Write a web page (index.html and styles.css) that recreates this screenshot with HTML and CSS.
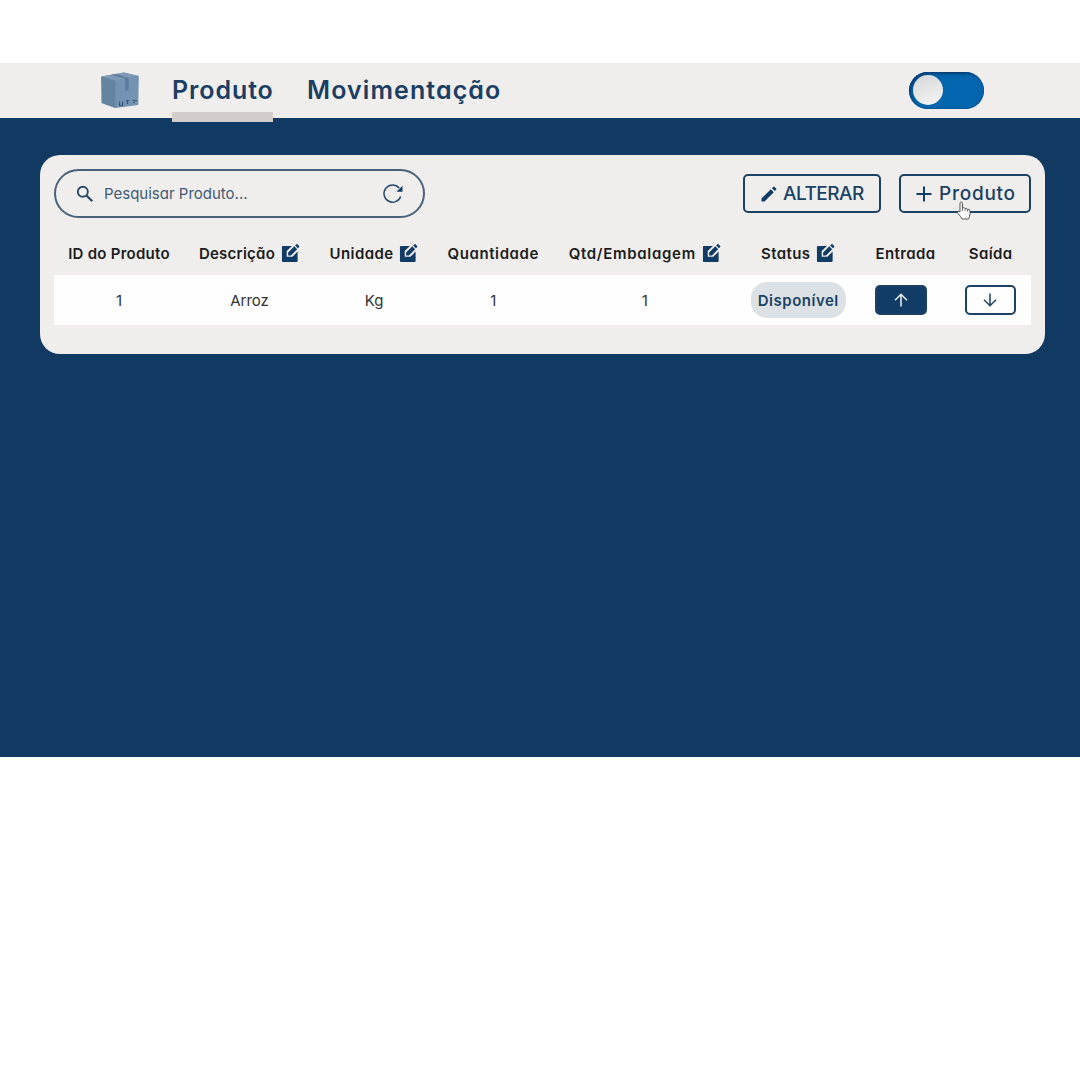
FILE: index.html
```html
<!DOCTYPE html>
<html lang="pt-BR">
<head>
<meta charset="utf-8">
<title>Produto</title>
<link rel="stylesheet" href="styles.css">
</head>
<body>
<svg class="defs" width="0" height="0">
  <symbol id="edit" viewBox="0 0 20 20">
    <path fill="#113c65" d="M1.500 2.500H11.500L6 8V14H12L17.500 8.500V18.500Q17.500 19.500 16.500 19.500H2Q1 19.500 1 18.500V3.500Q1 2.500 2 2.500Z"/>
    <path fill="#113c65" d="M7.500 9.500L14 3L17 6L10.500 12.500H7.500ZM14.900 2.100L16.200.8Q16.800.3 17.400.8L19.100 2.500Q19.600 3.100 19.100 3.700L17.800 5Z"/>
  </symbol>
</svg>
<div class="app">
  <header class="topbar">
    <svg class="logo" viewBox="0 0 40 38" width="40" height="38">
      <path fill="#7492b2" d="M1.300 4.500L24 .5L38.800 4L38.300 33L15.500 36L1.700 31Z"/>
      <path fill="#64839f" d="M1.300 4.500L15.500 8.500V36L1.700 31Z"/>
      <path fill="#7c99b8" d="M1.300 4.500L24 .5L38.800 4L15.500 8.500Z"/>
      <path fill="#5b7a9a" d="M11 2.800L15 2.100L28.500 6V18L25.300 19V6.600Z"/>
      <path d="M19.500 29.500V33.500H22.500V29.500M26 28.500H29M27.500 28.500V32M32.500 28.500H37M33 30.500H35" fill="none" stroke="#3a5876" stroke-width="1.200"/>
    </svg>
    <nav class="nav">
      <a class="tab active"><span class="t-prod">Produto</span></a>
      <a class="tab"><span class="t-mov">Movimentação</span></a>
    </nav>
    <div class="switch"><span class="knob"></span></div>
  </header>
  <main class="panel">
    <div class="toolbar">
      <div class="search">
        <svg width="18" height="18" viewBox="0 0 18 18" fill="none" stroke="#2d4b68"><circle cx="6.800" cy="6.800" r="5" stroke-width="1.900"/><path d="M10.500 10.500L16.300 16.300" stroke-width="2.300"/></svg>
        <span class="placeholder">Pesquisar Produto...</span>
        <svg class="reload" width="22" height="22" viewBox="0 0 22 22"><path d="M18.700 13.500A8.600 8.600 0 1 1 17.200 5" fill="none" stroke="#284a6a" stroke-width="1.500"/><path d="M20.500 2.800V8.700H14.500Z" fill="#113c65"/></svg>
      </div>
      <div class="actions">
        <button class="btn alter"><svg width="16" height="16" viewBox="0 0 16 16" fill="#113c65"><path d="M.5 12.500L9.800 3.200L12.800 6.200L3.500 15.500H.5ZM10.900 2.200L12.200.9Q12.900.3 13.600.9L15.100 2.400Q15.700 3.100 15.100 3.800L13.800 5.100Z"/></svg><span>ALTERAR</span></button>
        <button class="btn add"><svg width="16" height="16" viewBox="0 0 16 16" fill="none" stroke="#113c65" stroke-width="2"><path d="M8 .5V15.500M.5 8H15.500"/></svg><span>Produto</span>
          <svg class="cursor" width="16" height="20" viewBox="0 0 16 20"><path d="M4 10V2.500Q4 1 5.300 1Q6.500 1 6.500 2.500V7Q8.500 6 9 7.500Q11 6.800 11.500 8.300Q14 7.700 14 10V13Q14 15 12.500 18H6Q5 15.500 2 12.500Q1 11 2.200 10.300Q3.200 9.800 4 11Z" fill="#fff" stroke="#555" stroke-width="1"/><path d="M6.500 7V10M9 7.500V10M11.500 8.300V10.500" stroke="#555" stroke-width=".8"/></svg>
        </button>
      </div>
    </div>
    <div class="grid head">
      <div><span class="h-id">ID do Produto</span></div>
      <div><span class="h-desc">Descrição</span><svg class="edit"><use href="#edit"/></svg></div>
      <div><span class="h-unit">Unidade</span><svg class="edit"><use href="#edit"/></svg></div>
      <div><span class="h-qty">Quantidade</span></div>
      <div><span class="h-pack">Qtd/Embalagem</span><svg class="edit"><use href="#edit"/></svg></div>
      <div><span class="h-status">Status</span><svg class="edit"><use href="#edit"/></svg></div>
      <div><span class="h-in">Entrada</span></div>
      <div><span class="h-out">Saída</span></div>
    </div>
    <div class="grid row">
      <div>1</div>
      <div><span class="arroz">Arroz</span></div>
      <div>Kg</div>
      <div>1</div>
      <div>1</div>
      <div><span class="badge">Disponível</span></div>
      <div class="left"><button class="move in"><svg width="14" height="14" viewBox="0 0 14 14"><path d="M7 13.500V1.500M1 7.300L7 1.300L13 7.300"/></svg></button></div>
      <div><button class="move out"><svg width="14" height="14" viewBox="0 0 14 14"><path d="M7 .5V12.500M1 6.700L7 12.700L13 6.700"/></svg></button></div>
    </div>
  </main>
</div>
</body>
</html>
```
FILE: styles.css
```css
* { box-sizing: border-box; }
body { margin: 0; padding-top: 63px; background: #fff; font-family: Inter, "Open Sans", sans-serif; font-feature-settings: "cv11"; color: #1c1c1c; white-space: nowrap; }
.defs { display: block; height: 0; }
.app { height: 694px; background: #103a62; }
.topbar { height: 55px; background: #f0eeed; display: flex; align-items: center; padding: 0 96px 0 100px; }
.logo { display: block; }
.nav { display: flex; align-self: stretch; gap: 34px; margin-left: 32px; }
.tab { height: 59px; padding-top: 10px; font-size: 25px; line-height: 34px; font-weight: 600; color: #1b3e62; }
.t-prod { letter-spacing: .9px; }
.t-mov { letter-spacing: 1.1px; }
.active { width: 101px; border-bottom: 10px solid #d2cdca; }
.switch { width: 75px; height: 37px; margin-left: auto; border-radius: 19px; background: #0265ae; box-shadow: inset 2px 2px 3px #073c70, inset -1px -1px 1px #0a589b; padding: 3px 4px; }
.knob { display: block; width: 30px; height: 30px; border-radius: 50%; background: linear-gradient(160deg, #d3d5d7, #e6e6e6 50%, #f7f5f4); }
.panel { width: 1005px; height: 199px; margin: 37px 0 0 40px; padding: 14px 14px 0; border-radius: 20px; background: #f0eeed; }
.toolbar { display: flex; justify-content: space-between; height: 49px; align-items: center; }
.search { width: 371px; height: 49px; border: 2px solid #4a6379; border-radius: 25px; display: flex; align-items: center; padding: 0 19px 0 20px; }
.placeholder { margin-left: 10px; font-size: 15px; color: #415a73; }
.reload { margin-left: auto; }
.actions { display: flex; gap: 18px; }
.btn { height: 39px; padding: 0 0 0 15px; border: 2px solid #1b4164; border-radius: 5px; background: none; display: flex; align-items: center; gap: 7px; font: 500 19px Inter, sans-serif; font-feature-settings: "cv11"; color: #1b4164; }
.alter { width: 138px; padding-left: 16px; gap: 6px; letter-spacing: -.5px; }
.add { width: 132px; position: relative; letter-spacing: .75px; }
.cursor { position: absolute; left: 55px; top: 25px; }
.grid { display: grid; grid-template-columns: 130px 131px 118px 120.5px 182.5px 124.5px 90px 80.5px; }
.grid > div { display: flex; align-items: center; justify-content: center; }
.head { height: 45px; margin-top: 12px; padding-top: 1px; font-size: 15px; font-weight: 600; }
.head .edit { width: 19px; height: 20px; margin-left: 6px; flex: none; }
.h-id { letter-spacing: .25px; }
.h-desc { letter-spacing: .25px; }
.h-unit { letter-spacing: .4px; }
.h-qty { letter-spacing: .6px; }
.h-pack { letter-spacing: .7px; }
.h-status, .h-in, .h-out { letter-spacing: .4px; }
.row { height: 50px; width: 977px; margin-top: 0; background: #fefefe; font-size: 15px; color: #333; }
.badge { width: 95px; height: 36px; border-radius: 16px; background: #dce1e5; display: flex; align-items: center; justify-content: center; font-weight: 600; letter-spacing: .5px; color: #1b4164; }
.grid > .left { justify-content: flex-start; padding-left: 14px; }
.move { width: 52px; height: 30px; padding: 0; border: 2px solid #1b4164; border-radius: 5px; background: #fefefe; display: flex; align-items: center; justify-content: center; }
.move svg { fill: none; stroke: #29496a; stroke-width: 1.6; }
.out { width: 51px; margin-right: 1px; }
.in { background: #113c65; }
.in svg { stroke: #e3e8ec; }
```
